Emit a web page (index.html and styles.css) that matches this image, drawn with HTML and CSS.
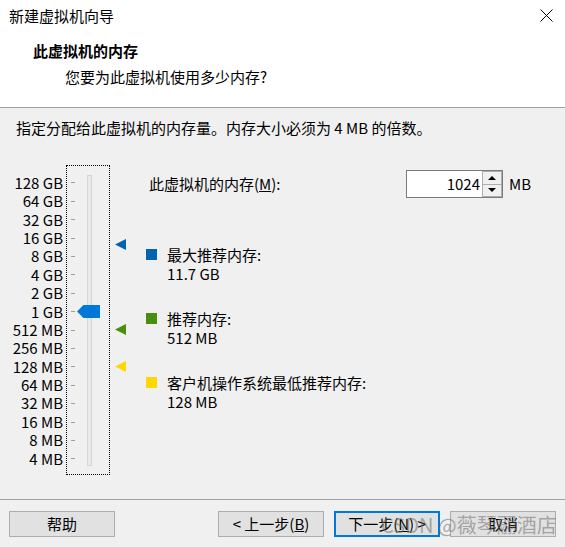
FILE: index.html
```html
<!DOCTYPE html>
<html lang="zh-CN">
<head>
<meta charset="utf-8">
<title>新建虚拟机向导</title>
<link rel="stylesheet" href="styles.css">
</head>
<body>
<div class="window">
  <header class="header">
    <div class="titlebar">
      <span class="title">新建虚拟机向导</span>
      <svg class="close" width="13" height="13" viewBox="0 0 13 13"><path d="M0.5 0.5L12.5 12.5M12.5 0.5L0.5 12.5" stroke="#000" stroke-width="1" fill="none"/></svg>
    </div>
    <div class="heading">此虚拟机的内存</div>
    <div class="subheading">您要为此虚拟机使用多少内存?</div>
  </header>
  <main class="content">
    <p class="intro">指定分配给此虚拟机的内存量。内存大小必须为 4 MB 的倍数。</p>
    <div class="main">
      <div class="scale">
        <div class="labels">
          <div class="label">128 GB</div>
          <div class="label">64 GB</div>
          <div class="label">32 GB</div>
          <div class="label">16 GB</div>
          <div class="label">8 GB</div>
          <div class="label">4 GB</div>
          <div class="label">2 GB</div>
          <div class="label">1 GB</div>
          <div class="label">512 MB</div>
          <div class="label">256 MB</div>
          <div class="label">128 MB</div>
          <div class="label">64 MB</div>
          <div class="label">32 MB</div>
          <div class="label">16 MB</div>
          <div class="label">8 MB</div>
          <div class="label">4 MB</div>
        </div>
        <div class="box">
          <div class="ticks">
            <div class="tick"></div><div class="tick"></div><div class="tick"></div><div class="tick"></div>
            <div class="tick"></div><div class="tick"></div><div class="tick"></div><div class="tick"></div>
            <div class="tick"></div><div class="tick"></div><div class="tick"></div><div class="tick"></div>
            <div class="tick"></div><div class="tick"></div><div class="tick"></div><div class="tick"></div>
          </div>
          <div class="track"></div>
          <div class="thumb"></div>
        </div>
        <div class="markers">
          <div class="marker marker-max"></div>
          <div class="marker marker-rec"></div>
          <div class="marker marker-min"></div>
        </div>
      </div>
      <div class="settings">
        <div class="mem-row">
          <span class="mem-label">此虚拟机的内存(<u>M</u>):</span>
          <div class="spinbox">
            <div class="spin-value">1024</div>
            <div class="spin-buttons">
              <div class="spin-btn"><span class="arrow-up"></span></div>
              <div class="spin-btn"><span class="arrow-down"></span></div>
            </div>
          </div>
          <span class="unit">MB</span>
        </div>
        <div class="legend">
          <div class="legend-item">
            <span class="swatch swatch-max"></span>
            <div class="legend-text"><div>最大推荐内存:</div><div>11.7 GB</div></div>
          </div>
          <div class="legend-item">
            <span class="swatch swatch-rec"></span>
            <div class="legend-text"><div>推荐内存:</div><div>512 MB</div></div>
          </div>
          <div class="legend-item">
            <span class="swatch swatch-min"></span>
            <div class="legend-text"><div>客户机操作系统最低推荐内存:</div><div>128 MB</div></div>
          </div>
        </div>
      </div>
    </div>
  </main>
  <footer class="footer">
    <button class="btn">帮助</button>
    <div class="nav-buttons">
      <button class="btn">&lt; 上一步(<u>B</u>)</button>
      <button class="btn btn-default">下一步(<u>N</u>) &gt;</button>
      <button class="btn">取消</button>
    </div>
  </footer>
  <div class="watermark">CSDN @薇琴翮酒店</div>
</div>
</body>
</html>
```

FILE: styles.css
```css
html, body {
  margin: 0;
  padding: 0;
}
body {
  background: #f0f0f0;
  font-family: "Noto Sans CJK SC", "Noto Sans", sans-serif;
  font-size: 15px;
  color: #000;
}
.window {
  position: relative;
  width: 565px;
  height: 547px;
  display: flex;
  flex-direction: column;
  overflow: hidden;
}
.header {
  background: #fff;
  height: 107px;
  border-bottom: 1px solid #a0a0a0;
}
.titlebar {
  height: 32px;
  display: flex;
  align-items: center;
  justify-content: space-between;
  padding: 0 12px 0 9px;
}
.title {
  line-height: 20px;
}
.close {
  display: block;
  margin-top: -1px;
}
.heading {
  margin-top: 9px;
  padding-left: 33px;
  line-height: 20px;
  font-weight: bold;
}
.subheading {
  margin-top: 6px;
  padding-left: 65px;
  line-height: 20px;
}
.content {
  flex: 1;
  padding: 10px 0 0 16px;
}
.intro {
  margin: 0;
  line-height: 20px;
}
.main {
  display: flex;
  margin-top: 27px;
  margin-left: -16px;
}
.scale {
  display: flex;
  height: 310px;
}
.labels {
  width: 63px;
  padding-top: 8.8px;
  text-align: right;
  font-size: 15px;
}
.label {
  height: 18.4px;
  line-height: 18.4px;
}
.box {
  position: relative;
  margin-left: 3px;
  width: 42px;
  height: 308px;
  border: 1px dotted #000;
  display: flex;
}
.ticks {
  margin-left: 4px;
  padding-top: 7.8px;
  width: 5px;
}
.tick {
  height: 18.4px;
  display: flex;
  align-items: center;
}
.tick::before {
  content: "";
  display: block;
  width: 4px;
  height: 1px;
  background: #a0a0a0;
}
.track {
  margin-left: 11px;
  margin-top: 9px;
  width: 3px;
  height: 289px;
  background: #e7eaea;
  border: 1px solid #d6d6d6;
}
.thumb {
  position: absolute;
  left: 10px;
  top: 139px;
  width: 23px;
  height: 13px;
  background: #0078d7;
  clip-path: polygon(0 50%, 28% 0, 100% 0, 100% 100%, 28% 100%);
}
.markers {
  position: relative;
  width: 36px;
}
.marker {
  position: absolute;
  left: 5px;
  width: 11px;
  height: 11px;
  clip-path: polygon(0 50%, 100% 0, 100% 100%);
}
.marker-max { top: 74px; background: #0063b1; }
.marker-rec { top: 159px; background: #498f0d; }
.marker-min { top: 196px; background: #ffd800; }
.settings {
  padding-top: 5px;
}
.mem-row {
  display: flex;
  align-items: center;
  height: 28px;
}
.mem-label {
  width: 257px;
  padding-left: 3px;
  line-height: 20px;
}
.spinbox {
  display: flex;
  height: 28px;
  box-sizing: border-box;
  border: 1px solid #7a7a7a;
  background: #fff;
}
.spin-value {
  width: 73px;
  text-align: right;
  line-height: 26px;
  padding-right: 2px;
}
.spin-buttons {
  display: flex;
  flex-direction: column;
  width: 20px;
}
.spin-btn {
  flex: 1;
  box-sizing: border-box;
  border: 1px solid #adadad;
  background: #f0f0f0;
  display: flex;
  align-items: center;
  justify-content: center;
}
.spin-btn + .spin-btn {
  border-top: none;
}
.arrow-up {
  width: 0;
  height: 0;
  border-left: 4px solid transparent;
  border-right: 4px solid transparent;
  border-bottom: 4px solid #000;
}
.arrow-down {
  width: 0;
  height: 0;
  border-left: 4px solid transparent;
  border-right: 4px solid transparent;
  border-top: 4px solid #000;
}
.unit {
  margin-left: 6px;
  line-height: 20px;
}
.legend {
  margin-top: 46.5px;
  display: flex;
  flex-direction: column;
  gap: 26px;
}
.legend-item {
  display: flex;
  align-items: flex-start;
}
.swatch {
  width: 11px;
  height: 11px;
  margin-top: 4px;
  margin-right: 10px;
}
.swatch-max { background: #0063b1; }
.swatch-rec { background: #498f0d; }
.swatch-min { background: #ffd800; }
.legend-text {
  line-height: 19px;
}
.footer {
  height: 48px;
  box-sizing: border-box;
  border-top: 1px solid #a0a0a0;
  padding: 11px 9px 0 9px;
  display: flex;
  justify-content: space-between;
  align-items: flex-start;
}
.nav-buttons {
  display: flex;
  gap: 10px;
}
.btn {
  width: 106px;
  height: 26px;
  box-sizing: border-box;
  padding: 0;
  border: 1px solid #adadad;
  background: #e1e1e1;
  font-family: inherit;
  font-size: 15px;
  color: #000;
  line-height: 22px;
}
.btn-default {
  border: 2px solid #0078d7;
}
.watermark {
  position: absolute;
  left: 381px;
  top: 512px;
  font-size: 20px;
  line-height: 26px;
  color: rgba(110, 110, 110, 0.55);
  white-space: nowrap;
  pointer-events: none;
}
```
